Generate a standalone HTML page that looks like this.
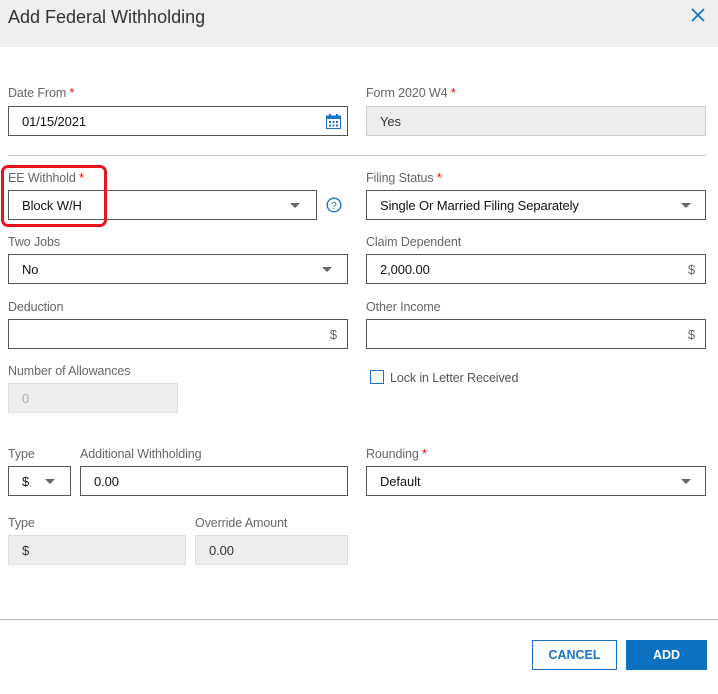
<!DOCTYPE html>
<html><head><style>
*{margin:0;padding:0;box-sizing:border-box}
body{width:718px;height:694px;background:#fff;font-family:"Liberation Sans",Arial,sans-serif;position:relative;overflow:hidden;color:#222}
.a{position:absolute}
.lbl{position:absolute;font-size:12.5px;color:#666;letter-spacing:-0.1px}
.lbl b{color:#e00;font-weight:normal}
.in{position:absolute;height:30px;border:1px solid #555;background:#fff;font-size:13px;padding-left:13px;line-height:30px;color:#111;letter-spacing:-0.1px}
.dis{background:#eee;border-color:#ccc;color:#333}
.car{position:absolute;width:0;height:0;border-left:5px solid transparent;border-right:5px solid transparent;border-top:5px solid #666;top:12px}
.dol{position:absolute;right:10px;top:0;color:#666;font-size:13px}
</style></head><body>
<div class="a" style="left:0;top:0;width:718px;height:47px;background:#efefef"></div>
<div class="a" style="left:8px;top:7px;font-size:18px;color:#333">Add Federal Withholding</div>
<svg class="a" style="left:690px;top:7px" width="16" height="16"><path d="M2 2L14 14M14 2L2 14" stroke="#1a73c8" stroke-width="1.8"/></svg>

<div class="lbl" style="left:8px;top:86px">Date From <b>*</b></div>
<div class="in" style="left:8px;top:106px;width:340px">01/15/2021
<svg class="a" style="right:6px;top:7px" width="15" height="15"><rect x="0.5" y="2" width="14" height="12.5" fill="#fff" stroke="#1a73c8"/><rect x="0.5" y="2" width="14" height="3" fill="#1a73c8"/><rect x="3" y="0" width="2" height="3" fill="#1a73c8"/><rect x="10" y="0" width="2" height="3" fill="#1a73c8"/><g fill="#1a73c8"><rect x="3" y="7" width="2" height="2"/><rect x="6.5" y="7" width="2" height="2"/><rect x="10" y="7" width="2" height="2"/><rect x="3" y="10.5" width="2" height="2"/><rect x="6.5" y="10.5" width="2" height="2"/><rect x="10" y="10.5" width="2" height="2"/></g></svg></div>
<div class="lbl" style="left:366px;top:86px">Form 2020 W4 <b>*</b></div>
<div class="in dis" style="left:366px;top:106px;width:340px">Yes</div>

<div class="a" style="left:8px;top:155px;width:698px;height:1px;background:#ccc"></div>

<div class="lbl" style="left:8px;top:171px">EE Withhold <b>*</b></div>
<div class="in" style="left:8px;top:190px;width:309px">Block W/H<div class="car" style="right:16px"></div></div>
<svg class="a" style="left:326px;top:197px" width="16" height="16"><circle cx="8" cy="8" r="6.8" fill="none" stroke="#1a73c8" stroke-width="1.4"/><text x="8" y="12" font-size="10" text-anchor="middle" fill="#1a73c8" font-family="Liberation Sans">?</text></svg>
<div class="a" style="left:1px;top:165px;width:106px;height:62px;border:3px solid #e8141c;border-radius:7px"></div>
<div class="lbl" style="left:366px;top:171px">Filing Status <b>*</b></div>
<div class="in" style="left:366px;top:190px;width:340px">Single Or Married Filing Separately<div class="car" style="right:14px"></div></div>

<div class="lbl" style="left:8px;top:235px">Two Jobs</div>
<div class="in" style="left:8px;top:254px;width:340px">No<div class="car" style="right:15px"></div></div>
<div class="lbl" style="left:366px;top:235px">Claim Dependent</div>
<div class="in" style="left:366px;top:254px;width:340px">2,000.00<span class="dol">$</span></div>

<div class="lbl" style="left:8px;top:300px">Deduction</div>
<div class="in" style="left:8px;top:319px;width:340px"><span class="dol">$</span></div>
<div class="lbl" style="left:366px;top:300px">Other Income</div>
<div class="in" style="left:366px;top:319px;width:340px"><span class="dol">$</span></div>

<div class="lbl" style="left:8px;top:364px">Number of Allowances</div>
<div class="in dis" style="left:8px;top:383px;width:170px;color:#aaa;border-color:#ddd">0</div>
<div class="a" style="left:370px;top:370px;width:14px;height:14px;border:1px solid #1a73c8;background:#fff"></div>
<div class="lbl" style="left:390px;top:371px;color:#555">Lock in Letter Received</div>

<div class="lbl" style="left:8px;top:447px">Type</div>
<div class="in" style="left:8px;top:466px;width:63px">$<div class="car" style="right:15px"></div></div>
<div class="lbl" style="left:80px;top:447px">Additional Withholding</div>
<div class="in" style="left:80px;top:466px;width:268px">0.00</div>
<div class="lbl" style="left:366px;top:447px">Rounding <b>*</b></div>
<div class="in" style="left:366px;top:466px;width:340px">Default<div class="car" style="right:14px"></div></div>

<div class="lbl" style="left:8px;top:516px">Type</div>
<div class="in dis" style="left:8px;top:535px;width:178px;border-color:#ddd">$</div>
<div class="lbl" style="left:195px;top:516px">Override Amount</div>
<div class="in dis" style="left:195px;top:535px;width:153px;border-color:#ddd">0.00</div>

<div class="a" style="left:0;top:619px;width:718px;height:1px;background:#bbb"></div>
<div class="a" style="left:532px;top:640px;width:85px;height:30px;border:1px solid #1a73c8;color:#1a73c8;font-size:12.5px;font-weight:bold;text-align:center;line-height:29px">CANCEL</div>
<div class="a" style="left:626px;top:640px;width:81px;height:30px;background:#0b72c3;color:#fff;font-size:12.5px;font-weight:bold;text-align:center;line-height:31px">ADD</div>
</body></html>
